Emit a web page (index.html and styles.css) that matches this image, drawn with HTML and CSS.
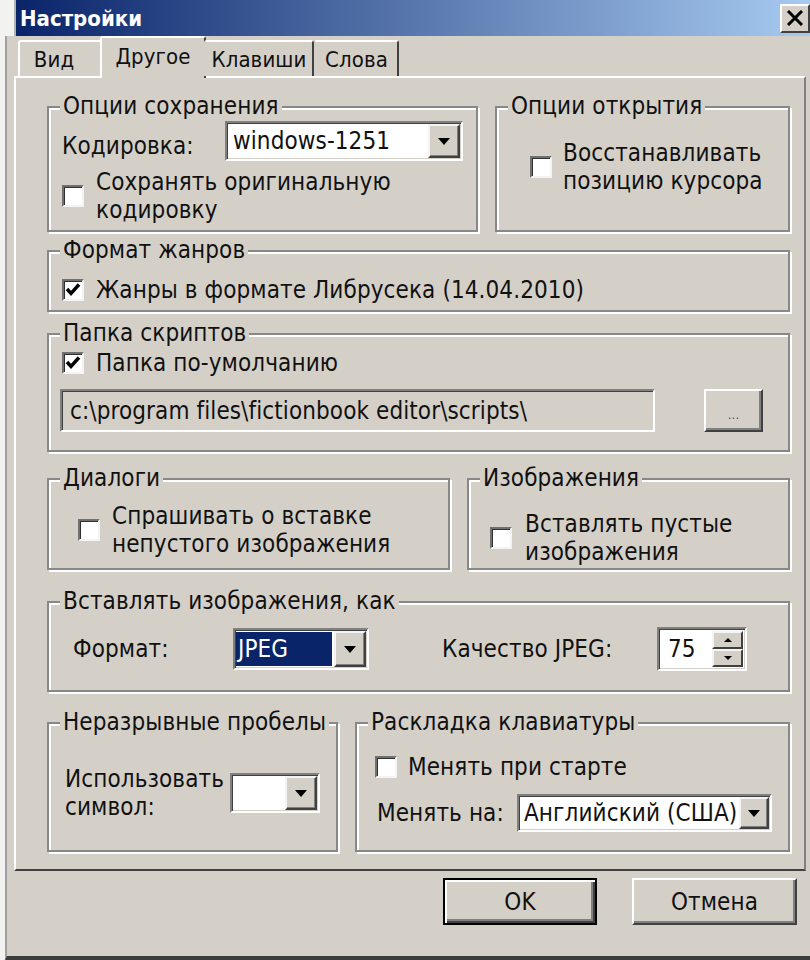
FILE: index.html
```html
<!DOCTYPE html>
<html lang="ru">
<head>
<meta charset="utf-8">
<title>Настройки</title>
<link rel="stylesheet" href="styles.css">
</head>
<body>
<div class="titlerow">
  <div class="titlebar">
    <span class="title">Настройки</span>
    <span class="close"><svg width="18" height="16" viewBox="0 0 18 16"><path d="M2 1 L16 15 M16 1 L2 15" stroke="#000" stroke-width="3" fill="none"/></svg></span>
  </div>
</div>
<div class="frame">
  <div class="tabs">
    <div class="tab tab-view">Вид</div>
    <div class="tab tab-other active">Другое</div>
    <div class="tab tab-keys">Клавиши</div>
    <div class="tab tab-words">Слова</div>
  </div>
  <div class="panel">
    <div class="row row-1">
      <div class="group g-save">
        <span class="gtitle">Опции сохранения</span>
        <div class="enc-row">
          <span class="enc-label">Кодировка:</span>
          <div class="combo combo-enc"><span class="combo-text">windows-1251</span><span class="combo-btn"><i class="arrow"></i></span></div>
        </div>
        <div class="chk-row gap12 mt7">
          <span class="chk"></span>
          <span class="lbl">Сохранять оригинальную<br>кодировку</span>
        </div>
      </div>
      <div class="group g-open">
        <span class="gtitle">Опции открытия</span>
        <div class="chk-row gap11">
          <span class="chk"></span>
          <span class="lbl">Восстанавливать<br>позицию курсора</span>
        </div>
      </div>
    </div>

    <div class="group g-genre">
      <span class="gtitle">Формат жанров</span>
      <div class="chk-row gap12">
        <span class="chk checked"><svg width="18" height="18" viewBox="0 0 18 18"><path d="M3 8 L7 12.5 L15 3.5" stroke="#000" stroke-width="3.4" fill="none"/></svg></span>
        <span class="lbl">Жанры в формате Либрусека (14.04.2010)</span>
      </div>
    </div>

    <div class="group g-scripts">
      <span class="gtitle">Папка скриптов</span>
      <div class="chk-row gap12 ml2">
        <span class="chk checked"><svg width="18" height="18" viewBox="0 0 18 18"><path d="M3 8 L7 12.5 L15 3.5" stroke="#000" stroke-width="3.4" fill="none"/></svg></span>
        <span class="lbl">Папка по-умолчанию</span>
      </div>
      <div class="path-row">
        <div class="field">c:\program files\fictionbook editor\scripts\</div>
        <div class="btn btn-dots">...</div>
      </div>
    </div>

    <div class="row row-4">
      <div class="group g-dialogs">
        <span class="gtitle">Диалоги</span>
        <div class="chk-row gap12">
          <span class="chk"></span>
          <span class="lbl">Спрашивать о вставке<br>непустого изображения</span>
        </div>
      </div>
      <div class="group g-images">
        <span class="gtitle">Изображения</span>
        <div class="chk-row gap13">
          <span class="chk"></span>
          <span class="lbl">Вставлять пустые<br>изображения</span>
        </div>
      </div>
    </div>

    <div class="group g-insert">
      <span class="gtitle">Вставлять изображения, как</span>
      <div class="insert-row">
        <span class="fmt-label">Формат:</span>
        <div class="combo combo-fmt"><span class="combo-text sel">JPEG</span><span class="combo-btn"><i class="arrow"></i></span></div>
        <span class="q-label">Качество JPEG:</span>
        <div class="spin">
          <span class="spin-text">75</span>
          <span class="spin-btns">
            <span class="spin-btn"><i class="arrow-up"></i></span>
            <span class="spin-btn"><i class="arrow-down"></i></span>
          </span>
        </div>
      </div>
    </div>

    <div class="row row-6">
      <div class="group g-nbsp">
        <span class="gtitle">Неразрывные пробелы</span>
        <div class="nbsp-row">
          <span class="lbl nbsp-label">Использовать<br>символ:</span>
          <div class="combo combo-sym"><span class="combo-text"></span><span class="combo-btn"><i class="arrow"></i></span></div>
        </div>
      </div>
      <div class="group g-layout">
        <span class="gtitle">Раскладка клавиатуры</span>
        <div class="chk-row gap11">
          <span class="chk"></span>
          <span class="lbl">Менять при старте</span>
        </div>
        <div class="lang-row">
          <span class="lang-label">Менять на:</span>
          <div class="combo combo-lang"><span class="combo-text">Английский (США)</span><span class="combo-btn"><i class="arrow"></i></span></div>
        </div>
      </div>
    </div>
  </div>
  <div class="buttons">
    <div class="btn btn-ok">OK</div>
    <div class="btn btn-cancel">Отмена</div>
  </div>
</div>
</body>
</html>
```

FILE: styles.css
```css
* { box-sizing: border-box; }
html, body { margin: 0; padding: 0; }
body {
  width: 810px;
  height: 960px;
  overflow: hidden;
  background: #f2f2f0;
  font-family: "DejaVu Sans Condensed", "Liberation Sans", sans-serif;
  font-size: 24px;
  letter-spacing: 0.1px;
  color: #111;
}

/* title bar */
.titlerow { height: 36px; padding-left: 14px; display: flex; }
.titlebar {
  flex: 1;
  display: flex;
  align-items: center;
  justify-content: space-between;
  border-left: 2px solid #b4b4b4;
  background: linear-gradient(to right, #0a246a 0%, #a6caf0 100%);
  padding-left: 4px;
}
.title { color: #fff; font-weight: bold; font-size: 22px; letter-spacing: 0; }
.close {
  width: 30px;
  height: 29px;
  background: #d4d0c8;
  border: 2px solid;
  border-color: #fff #404040 #404040 #fff;
  display: flex;
  align-items: center;
  justify-content: center;
}

/* frame */
.frame {
  height: 924px;
  margin-left: 5px;
  border-left: 2px solid #a0a0a0;
  border-bottom: 4px solid #3c3c3c;
  background: #d4d0c8;
  display: flex;
  flex-direction: column;
}

/* tabs */
.tabs {
  height: 42px;
  display: flex;
  align-items: flex-end;
  padding-left: 11px;
  position: relative;
  z-index: 2;
  font-size: 22px;
}
.tab {
  height: 36px;
  margin-bottom: 2px;
  display: flex;
  align-items: center;
  justify-content: center;
  background: #d4d0c8;
  border-top: 2px solid #fff;
  border-left: 2px solid #fff;
  border-right: 2px solid #404040;
  border-radius: 3px 3px 0 0;
}
.tab-view { width: 84px; border-right-color: transparent; padding-right: 12px; }
.tab-other { width: 106px; margin-left: -2px; }
.tab-keys { width: 110px; border-left-color: transparent; margin-left: -2px; }
.tab-words { width: 85px; border-left-color: transparent; }
.tab.active {
  height: 42px;
  margin-bottom: 0;
  padding-bottom: 4px;
}

/* panel */
.panel {
  height: 795px;
  margin: -2px 4px 0 7px;
  border-top: 2px solid #fff;
  border-left: 2px solid #fff;
  border-right: 2px solid #808080;
  border-bottom: 2px solid #404040;
  padding: 28px 14px 0 31px;
  display: flex;
  flex-direction: column;
  position: relative;
  z-index: 1;
}
.row { display: flex; gap: 17px; }
.row-1 { height: 126px; }
.row-4 { height: 92px; margin-top: 26px; }
.row-6 { height: 130px; margin-top: 30px; }

/* group box */
.group {
  position: relative;
  border: 2px solid #888;
  box-shadow: inset 2px 2px 0 #fff, 2px 2px 0 #fff;
}
.gtitle {
  position: absolute;
  top: -16px;
  left: 11px;
  padding: 0 3px;
  line-height: 28px;
  background: #d4d0c8;
  white-space: nowrap;
}
.lbl { line-height: 28px; white-space: nowrap; }

.g-save { width: 431px; padding: 13px 0 0 13px; }
.g-open { width: 295px; padding: 31px 0 0 33px; }
.g-genre { height: 62px; margin-top: 18px; padding: 24px 0 0 13px; }
.g-scripts { height: 119px; margin-top: 21px; padding: 14px 0 0 11px; }
.g-dialogs { width: 403px; padding: 22px 0 0 29px; }
.g-images { width: 323px; padding: 30px 0 0 21px; }
.g-insert { height: 91px; margin-top: 31px; padding: 24px 0 0 24px; }
.g-nbsp { width: 291px; padding: 41px 0 0 16px; }
.g-layout { width: 435px; padding: 29px 0 0 18px; }

/* checkbox */
.chk-row { display: flex; align-items: center; }
.gap11 { gap: 11px; }
.gap12 { gap: 12px; }
.gap13 { gap: 13px; }
.mt7 { margin-top: 7px; }
.ml2 { margin-left: 2px; }
.chk {
  flex: none;
  width: 22px;
  height: 22px;
  background: #fff;
  border: 2px solid;
  border-color: #707070 #f4f4f4 #f4f4f4 #707070;
  box-shadow: inset 1px 1px 0 #303030;
  display: flex;
  align-items: center;
  justify-content: center;
}

/* combo box */
.enc-row { display: flex; align-items: center; height: 40px; }
.enc-label { width: 163px; padding-top: 10px; }
.combo {
  display: flex;
  background: #fff;
  border: 2px solid;
  border-color: #808080 #fff #fff #808080;
  box-shadow: inset 1px 1px 0 #404040, inset -1px -1px 0 #d4d0c8;
  padding: 1px;
}
.combo-text {
  flex: 1;
  display: flex;
  align-items: center;
  padding-left: 5px;
  white-space: nowrap;
  overflow: hidden;
}
.combo-text.sel {
  background: #0a246a;
  color: #fff;
  padding-left: 2px;
  margin: 1px 2px 1px 0;
}
.combo-btn {
  flex: none;
  width: 32px;
  background: #d4d0c8;
  border: 2px solid;
  border-color: #f4f4f4 #404040 #404040 #f4f4f4;
  box-shadow: inset -1px -1px 0 #808080;
  display: flex;
  align-items: center;
  justify-content: center;
}
.arrow {
  width: 0;
  height: 0;
  border-left: 6px solid transparent;
  border-right: 6px solid transparent;
  border-top: 7px solid #000;
}
.combo-enc { width: 238px; height: 40px; }
.combo-fmt { width: 136px; height: 42px; }
.combo-sym { width: 90px; height: 40px; }
.combo-lang { width: 255px; height: 38px; }
.combo-lang .combo-btn { width: 30px; }
.combo-lang .combo-text { padding-left: 4px; }

/* scripts path */
.path-row { display: flex; align-items: center; margin-top: 12px; }
.field {
  width: 595px;
  height: 43px;
  display: flex;
  align-items: center;
  padding-left: 8px;
  border: 2px solid;
  border-color: #808080 #fff #fff #808080;
  box-shadow: inset 1px 1px 0 #404040, inset -1px -1px 0 #d4d0c8;
  white-space: nowrap;
}
.btn {
  display: flex;
  align-items: center;
  justify-content: center;
  background: #d4d0c8;
  border: 2px solid;
  border-color: #fff #404040 #404040 #fff;
  box-shadow: inset -2px -2px 0 #808080;
}
.btn-dots {
  width: 59px;
  height: 43px;
  margin-left: 49px;
  font-size: 13px;
  color: #505050;
  padding-top: 8px;
}

/* insert images row */
.insert-row { display: flex; align-items: center; height: 44px; }
.fmt-label { width: 160px; }
.q-label { width: 215px; margin-left: 73px; }
.spin {
  width: 90px;
  height: 44px;
  display: flex;
  background: #fff;
  border: 2px solid;
  border-color: #808080 #fff #fff #808080;
  box-shadow: inset 1px 1px 0 #404040, inset -1px -1px 0 #d4d0c8;
  padding: 2px;
}
.spin-text { flex: 1; display: flex; align-items: center; padding-left: 7px; }
.spin-btns { width: 31px; display: flex; flex-direction: column; }
.spin-btn {
  flex: 1;
  background: #d4d0c8;
  border: 2px solid;
  border-color: #f4f4f4 #404040 #404040 #f4f4f4;
  display: flex;
  align-items: center;
  justify-content: center;
}
.arrow-up, .arrow-down {
  width: 0;
  height: 0;
  border-left: 4px solid transparent;
  border-right: 4px solid transparent;
}
.arrow-up { border-bottom: 4px solid #000; }
.arrow-down { border-top: 4px solid #000; }

/* nbsp */
.nbsp-row { display: flex; align-items: center; }
.nbsp-label { width: 165px; }

/* keyboard layout */
.lang-row { display: flex; align-items: center; margin-top: 13px; margin-left: 2px; }
.lang-label { width: 140px; }

/* bottom buttons */
.buttons {
  display: flex;
  justify-content: flex-end;
  gap: 35px;
  padding: 7px 13px 0 0;
}
.btn-ok {
  width: 154px;
  height: 47px;
  border: 2px solid #000;
  box-shadow: inset 2px 2px 0 #fff, inset -2px -2px 0 #404040, inset -4px -4px 0 #808080;
}
.btn-cancel { width: 165px; height: 47px; }
```
